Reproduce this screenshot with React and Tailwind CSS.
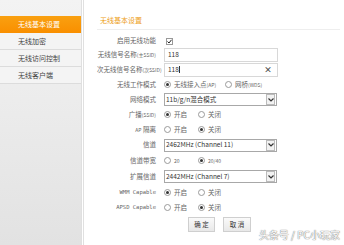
import React from 'react';

const font = { fontFamily: '"Noto Sans CJK SC", "Noto Sans", sans-serif' };

const Radio = ({ checked }) => (
  <span className="inline-flex w-[7px] h-[7px] rounded-full border border-[#9a9a9a] bg-white items-center justify-center">
    {checked && <span className="w-[3px] h-[3px] rounded-full bg-[#333]"></span>}
  </span>
);

const RadioPair = ({ a, b, which, gap = 'w-[34px]' }) => (
  <div className="flex items-center">
    <div className={`flex items-center gap-[3px] ${gap}`}>
      <Radio checked={which === 0} />
      <span>{a}</span>
    </div>
    <div className="flex items-center gap-[3px]">
      <Radio checked={which === 1} />
      <span>{b}</span>
    </div>
  </div>
);

const Select = ({ value }) => (
  <div className="flex items-center w-[113px] h-[13px] border border-[#a8a8a8] bg-white">
    <span className="flex-1 pl-[1px] text-[#333]">{value}</span>
    <span className="w-[9px] h-[11px] mr-[1px] border border-[#bbb] bg-[#f2f2f2] flex items-center justify-center">
      <svg width="6" height="4" viewBox="0 0 6 4">
        <path d="M0.5 0.5 L3 3 L5.5 0.5" stroke="#333" strokeWidth="1.2" fill="none" />
      </svg>
    </span>
  </div>
);

const Input = ({ value, clear }) => (
  <div className="flex items-center w-[114px] h-[14px] border border-[#d8d8d8] bg-white">
    <span className="flex-1 pl-[3px] text-[#333]">
      {value}
      {clear && <span className="inline-block w-px h-[7px] bg-[#333] align-middle"></span>}
    </span>
    {clear && <span className="pr-[5px] text-[8px] font-bold text-[#444]">×</span>}
  </div>
);

const Small = ({ children }) => <span className="text-[5px]">{children}</span>;

const rows = [
  { label: '启用无线功能', h: 'h-[14px]', el: (
    <span className="inline-flex w-[7px] h-[7px] ml-[2px] border border-[#999] bg-white items-center justify-center">
      <svg width="5" height="5" viewBox="0 0 5 5"><path d="M0.5 2.5 L2 4 L4.5 0.8" stroke="#222" strokeWidth="1" fill="none" /></svg>
    </span>
  ) },
  { label: <>无线信号名称<Small>(主SSID)</Small></>, h: 'h-[14px]', el: <Input value="118" /> },
  { label: <>次无线信号名称<Small>(次SSID)</Small></>, h: 'h-[15px]', el: <Input value="118" clear /> },
  { label: '无线工作模式', h: 'h-[15px]', el: <RadioPair a={<>无线接入点<Small>(AP)</Small></>} b={<>网桥<Small>(WDS)</Small></>} which={0} gap="w-[61px]" /> },
  { label: '网络模式', h: 'h-[15px]', el: <Select value="11b/g/n混合模式" /> },
  { label: <>广播<Small>(SSID)</Small></>, h: 'h-[15px]', el: <RadioPair a="开启" b="关闭" which={0} /> },
  { label: <><Small>AP</Small> 隔离</>, h: 'h-[15px]', el: <RadioPair a="开启" b="关闭" which={1} /> },
  { label: '信道', h: 'h-[16px]', el: <Select value="2462MHz (Channel 11)" /> },
  { label: '信道带宽', h: 'h-[15px]', el: <RadioPair a={<Small>20</Small>} b={<Small>20/40</Small>} which={1} /> },
  { label: '扩展信道', h: 'h-[17px]', el: <Select value="2442MHz (Channel 7)" /> },
  { label: 'WMM Capable', h: 'h-[15px]', el: <RadioPair a="开启" b="关闭" which={0} />, mono: true },
  { label: 'APSD Capable', h: 'h-[15px]', el: <RadioPair a="开启" b="关闭" which={1} />, mono: true },
];

const menu = ['无线基本设置', '无线加密', '无线访问控制', '无线客户端'];

export default function App() {
  return (
    <div className="relative w-[344px] h-[245px] overflow-hidden bg-white flex text-[6.5px] text-[#666]" style={font}>
      <div className="w-[81px] h-full bg-gradient-to-b from-[#f3f3f3] to-[#e2e2e2] pt-[16px]">
        {menu.map((m, i) => (
          <div
            key={m}
            className={
              i === 0
                ? 'h-[17px] flex items-center pl-[18px] text-[7px] text-white bg-gradient-to-b from-[#f9a010] to-[#f98f00]'
                : 'h-[17px] flex items-center pl-[18px] text-[7px] text-[#444] border-b border-[#dcdcdc] bg-[#f4f4f4]'
            }
          >
            {m}
          </div>
        ))}
      </div>
      <div className="w-[3px] h-full bg-white border-l border-r border-[#e0e0e0]"></div>

      <div className="flex-1 pl-[13px] pr-[4px]">
        <div className="h-[30px] flex items-end pb-[4px] pl-[3px] border-b border-[#eeeeee] text-[#eda020] text-[7px]">
          无线基本设置
        </div>
        <div className="pt-[4px]">
          {rows.map((r, i) => (
            <div key={i} className={`flex items-center ${r.h}`}>
              <div
                className="w-[67px] text-right pr-[8px] whitespace-nowrap"
                style={r.mono ? { fontFamily: '"DejaVu Sans Mono", monospace', fontSize: '5.5px' } : undefined}
              >
                {r.label}
              </div>
              <div className="flex items-center">{r.el}</div>
            </div>
          ))}
        </div>
        <div className="flex gap-[8px] pl-[91px] pt-[2px]">
          <button className="w-[27px] h-[15px] border border-[#cfcfcf] bg-gradient-to-b from-[#fafafa] to-[#e8e8e8] text-[#333] text-[6.5px]">确 定</button>
          <button className="w-[28px] h-[15px] border border-[#cfcfcf] bg-gradient-to-b from-[#fafafa] to-[#e8e8e8] text-[#333] text-[6.5px]">取 消</button>
        </div>
      </div>

      <div
        className="absolute right-[4px] bottom-[3px] text-[10px] text-white"
        style={{ textShadow: '0 0 1px #777, 0 0 1px #777' }}
      >
        头条号 / PC小玩家
      </div>
    </div>
  );
}
